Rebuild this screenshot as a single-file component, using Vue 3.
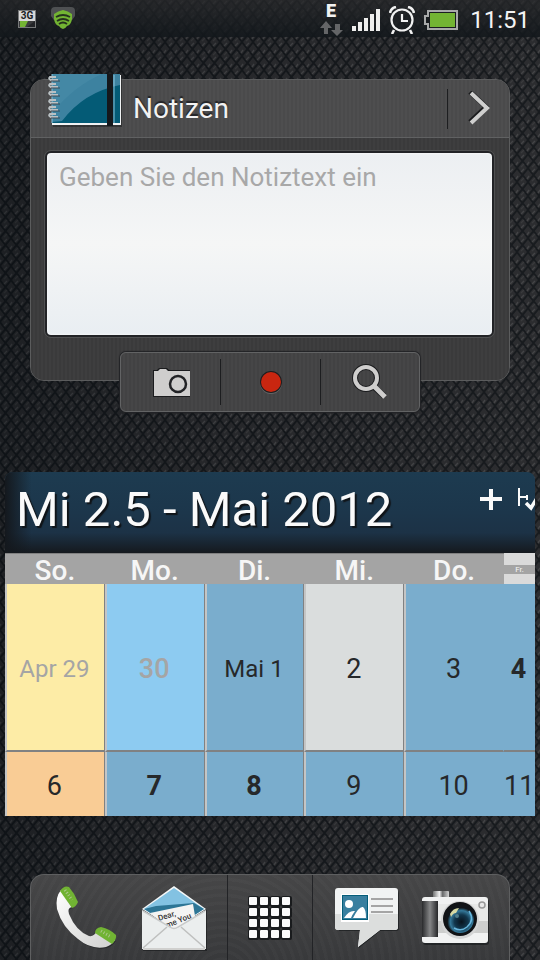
<script setup>
import { ref } from 'vue'

const note = ref('')
const dayNames = ['So.', 'Mo.', 'Di.', 'Mi.', 'Do.']
const weeks = [
  [
    { label: 'Apr 29', tone: 'yellow muted month' },
    { label: '30', tone: 'sky muted semi' },
    { label: 'Mai 1', tone: 'blue month' },
    { label: '2', tone: 'today' },
    { label: '3', tone: 'blue' },
    { label: '4', tone: 'blue bold' },
  ],
  [
    { label: '6', tone: 'orange' },
    { label: '7', tone: 'blue bold' },
    { label: '8', tone: 'blue bold' },
    { label: '9', tone: 'blue' },
    { label: '10', tone: 'blue' },
    { label: '11', tone: 'blue' },
  ],
]
const gridSteps = [0, 11, 22, 33]
const bars = [5, 9, 13, 17, 22]
</script>

<template>
  <div class="screen">
    <svg class="leather" aria-hidden="true">
      <defs>
        <pattern id="weave" width="11" height="14" patternUnits="userSpaceOnUse">
          <rect width="11" height="14" fill="#2a2b2e" />
          <path d="M-1 -1L12 15M12 -1L-1 15" stroke="#0e1216" stroke-width="2" />
          <path d="M4 4L7 1M10 11L12 8M-1 11L1 8" stroke="#4b4c4e" stroke-width="1.4" />
          <path d="M4 13L7 10" stroke="#3d3e40" stroke-width="1.2" />
        </pattern>
        <linearGradient id="shade" x1="0" x2="1" y1="0" y2="0">
          <stop offset="0" stop-color="#101418" stop-opacity=".5" />
          <stop offset=".5" stop-color="#222326" stop-opacity=".3" />
          <stop offset="1" stop-color="#303133" stop-opacity=".3" />
        </linearGradient>
      </defs>
      <rect width="100%" height="100%" fill="url(#weave)" />
      <rect width="100%" height="100%" fill="url(#shade)" />
    </svg>

    <header class="status">
      <div class="status-group">
        <svg class="net" viewBox="0 0 18 18" width="18" height="18" aria-hidden="true">
          <rect width="18" height="18" fill="#77797a" />
          <rect x="1" y="1" width="16" height="10" fill="#d8d8d8" />
          <text x="9" y="9" text-anchor="middle" font-size="10" font-weight="700" fill="#1b1d1f">3G</text>
          <rect x="1" y="11" width="16" height="6" fill="#3a3b3d" />
          <path d="M2 11h8l-3 6H2z" fill="#73b433" />
          <path d="M17 11v6H9z" fill="#222427" />
        </svg>
        <svg viewBox="0 0 26 24" width="26" height="24" aria-hidden="true">
          <path d="M1 4q0-4 4-4h16q4 0 4 4v5q-2 4-6 6H7q-4-2-6-6z" fill="#4e5052" />
          <path d="M4 7q4-3 9-4 5 1 9 4v5q-1 6-5 7-2 3-4 3t-4-3q-4-1-5-7z" fill="#73b433" />
          <path d="M6 10q7-4 14 0M7 14q6-4 12 0M9 17q4-3 8 0" fill="none" stroke="#25321d" stroke-width="1.8" />
        </svg>
      </div>
      <div class="status-group right">
        <svg viewBox="0 0 24 33" width="24" height="33" aria-hidden="true">
          <text x="12" y="14" text-anchor="middle" font-size="18" font-weight="900" fill="#f2f2f2">E</text>
          <path d="M7 18l6 7H9v6H5v-6H1zM18 33l-6-6h4v-6h5v6h3z" fill="#646567" />
        </svg>
        <svg viewBox="0 0 28 22" width="28" height="22" aria-hidden="true">
          <rect v-for="(h, i) in bars" :key="h" :x="i * 6" :y="22 - h" width="4" :height="h" fill="#eeeeed" />
        </svg>
        <svg viewBox="0 0 26 28" width="26" height="28" fill="none" stroke="#f2f2f2" aria-hidden="true">
          <circle cx="13" cy="14" r="10.5" stroke-width="2.2" />
          <path d="M13 8v7h6" stroke-width="2.2" />
          <path d="M1 7q1-5 6-6M19 1q5 1 6 6M5 24l-2 4M21 24l2 4" stroke-width="2.6" />
        </svg>
        <svg viewBox="0 0 34 20" width="34" height="20" aria-hidden="true">
          <path d="M3 0h31v20H3v-5H0V5h3z" fill="#a9aaaa" />
          <path d="M5 2h27v16H5v-5H2V7h3z" fill="#1a1d20" />
          <rect x="6" y="3" width="25" height="14" fill="#73b433" />
        </svg>
        <time class="clock">11:51</time>
      </div>
    </header>

    <main>
      <section class="notes" aria-label="Notizen">
        <div class="note-card">
          <div class="note-head">
            <svg class="book" viewBox="0 0 76 56" width="76" height="56" aria-hidden="true">
              <path d="M5 2h69v51H5z" fill="#17191c" opacity=".5" />
              <path d="M4 1h69v50H4z" fill="#f0f2f3" />
              <path d="M4 0h68v49H4z" fill="#045b76" />
              <path d="M4 0h68v11Q36 18 14 47L4 48z" fill="#3d82a0" />
              <path d="M4 0h50Q26 12 5 38z" fill="#5797b3" opacity=".3" />
              <path d="M59 0h6v52h-6z" fill="#15181c" />
              <path d="M4 0v49M66 1v48" stroke="#8ac3dc" stroke-width="1" />
              <path v-for="y in [6, 13, 21, 29, 36, 43]" :key="y" :d="`M10 ${y}H3q-3-1-1-3h6`" fill="none" stroke="#b9c0c3" stroke-width="2" />
              <path v-for="y in [7, 14, 22, 30, 37, 44]" :key="y" :d="`M3 ${y}h9`" stroke="#3a4b54" stroke-width="1" />
            </svg>
            <h2>Notizen</h2>
            <a class="open" href="#" aria-label="Notizen öffnen">
              <svg viewBox="0 0 22 36" width="22" height="36" fill="none" aria-hidden="true">
                <path d="M2 1l16 15L2 31" stroke="#1b1c1e" stroke-width="5" />
                <path d="M3 2l16 15L3 32" stroke="#cfcfce" stroke-width="4" />
              </svg>
            </a>
          </div>
          <div class="note-body">
            <textarea v-model="note" aria-label="Notiztext" placeholder="Geben Sie den Notiztext ein"></textarea>
          </div>
        </div>
        <div class="tools">
          <button type="button" aria-label="Foto">
            <svg viewBox="0 0 40 32" width="40" height="32" aria-hidden="true">
              <path d="M2 4h4l2-2h8l2 2h21v27H2z" fill="#1b1c1e" />
              <path d="M3 5h4l2-2h6l2 2h22v25H3z" fill="#cfcecd" />
              <circle cx="27" cy="18" r="8" fill="#cfcecd" stroke="#222326" stroke-width="2.5" />
            </svg>
          </button>
          <button type="button" aria-label="Aufnehmen">
            <svg viewBox="0 0 24 24" width="24" height="24" aria-hidden="true">
              <circle cx="13" cy="13" r="11" fill="#656667" />
              <circle cx="13" cy="12" r="11" fill="#1c1d1f" />
              <circle cx="13" cy="12" r="10" fill="#c92610" />
            </svg>
          </button>
          <button type="button" aria-label="Suchen">
            <svg viewBox="0 0 36 36" width="36" height="36" fill="none" aria-hidden="true">
              <path d="M21 22l11 10" stroke="#1b1c1e" stroke-width="6" />
              <circle cx="14" cy="14" r="11" stroke="#1b1c1e" stroke-width="6" />
              <circle cx="14" cy="14" r="11" stroke="#cfcecd" stroke-width="4" />
              <path d="M22 22l11 11" stroke="#cfcecd" stroke-width="5" />
            </svg>
          </button>
        </div>
      </section>

      <section class="calendar" aria-label="Kalender">
        <div class="cal-head">
          <h1>Mi 2.5 - Mai 2012</h1>
          <button type="button" aria-label="Termin hinzufügen">
            <svg viewBox="0 0 22 22" width="22" height="22" aria-hidden="true">
              <path d="M11 0v21M0 10h22" stroke="#fafafa" stroke-width="4" />
            </svg>
          </button>
          <button type="button" aria-label="Aufgaben">
            <svg viewBox="0 0 18 24" width="18" height="24" fill="none" aria-hidden="true">
              <path d="M2 0v18M3 9h8M10 7v5" stroke="#fafafa" stroke-width="2" />
              <path d="M9 15l5 5 6-10" stroke="#fafafa" stroke-width="3.5" />
            </svg>
          </button>
        </div>
        <table>
          <colgroup>
            <col v-for="name in dayNames" :key="name" />
            <col class="narrow" />
          </colgroup>
          <thead>
            <tr>
              <th v-for="name in dayNames" :key="name" scope="col">{{ name }}</th>
              <th scope="col" class="small-day"><span>Fr.</span></th>
            </tr>
          </thead>
          <tbody>
            <tr v-for="(week, w) in weeks" :key="w">
              <td v-for="day in week" :key="day.label" :class="day.tone">{{ day.label }}</td>
            </tr>
          </tbody>
        </table>
      </section>
    </main>

    <nav class="dock" aria-label="Favoriten">
      <div class="dock-side">
        <a href="#" aria-label="Telefon">
          <svg viewBox="0 0 64 66" width="64" height="66" aria-hidden="true">
            <defs>
              <linearGradient id="handset" x1="0" y1="0" x2="1" y2="1">
                <stop offset="0" stop-color="#ffffff" />
                <stop offset="1" stop-color="#cfcfce" />
              </linearGradient>
            </defs>
            <path d="M7 6Q1 13 3 25 8 43 24 55 37 66 52 63 58 61 61 56L43 47Q40 53 35 52 22 47 14 30 12 24 18 23z" fill="#16181a" opacity=".5" />
            <path d="M6 5Q0 12 2 24 7 42 23 54 36 65 51 62 57 60 60 55L42 46Q39 52 34 51 21 46 14 29 12 23 17 22z" fill="url(#handset)" />
            <path d="M5 6Q9 0 14 2 20 9 23 17 21 22 17 23z" fill="#71b333" />
            <path d="M40 48Q40 43 46 42 55 44 61 50 62 54 57 59z" fill="#71b333" />
            <path d="M10 5l7 10M46 46l10 6" stroke="#abc68b" stroke-width="3" stroke-dasharray="1 2" />
          </svg>
        </a>
        <a href="#" aria-label="Mail">
          <svg viewBox="0 0 66 66" width="66" height="66" aria-hidden="true">
            <path d="M2 25h64v41H2z" fill="#151719" opacity=".6" />
            <path d="M1 24L33 1l32 23-32 20z" fill="#f6f8f8" />
            <path d="M3 24L33 3l30 21-30 19z" fill="#83c2e2" />
            <path d="M3 24l12-3 38-3 10 6-30 19z" fill="#2d7595" />
            <path d="M9 28l43-9 3 18-21 11z" fill="#f4f4f3" />
            <g fill="#333" font-size="8" font-weight="500">
              <text x="18" y="36" transform="rotate(-17 18 36)">Dear,</text>
              <text x="26" y="43" transform="rotate(-22 26 43)">me You</text>
            </g>
            <path d="M1 25l32 19 32-19v39H1z" fill="#ebeeee" />
            <path d="M2 63l24-21M64 63L40 42" stroke="#bfc0bf" stroke-width="1.5" />
            <path d="M2 26l27 16q4 3 8 0l27-16" fill="none" stroke="#c8caca" stroke-width="1.5" />
            <path d="M2 64h62" stroke="#d0d0ce" stroke-width="2" />
          </svg>
        </a>
      </div>
      <a class="apps" href="#" aria-label="Alle Apps">
        <svg viewBox="0 0 44 44" width="44" height="44" aria-hidden="true">
          <template v-for="y in gridSteps" :key="y">
            <g v-for="x in gridSteps" :key="x">
              <rect :x="x" :y="y" width="11" height="11" rx="2" fill="#191b1d" />
              <rect :x="x + 1" :y="y + 1" width="8" height="8" rx="1" fill="#fafafa" />
            </g>
          </template>
        </svg>
      </a>
      <div class="dock-side">
        <a href="#" aria-label="Nachrichten">
          <svg viewBox="0 0 64 60" width="64" height="60" aria-hidden="true">
            <path d="M4 2h58q2 1 2 4v34q0 3-3 3H45L24 60l1-17H4z" fill="#131517" opacity=".6" />
            <path d="M3 0h57q3 0 3 3v36q0 3-3 3H45L23 59l2-17H3q-3 0-3-3V3q0-3 3-3z" fill="#f1f3f3" />
            <path d="M0 26h63v13q0 3-3 3H45L23 59l2-17H3q-3 0-3-3z" fill="#dcdedd" />
            <path d="M6 6h28v28H6z" fill="#fff" />
            <path d="M7 7h26v25H7z" fill="#045d79" />
            <path d="M8 8h24v23H8z" fill="#397f9f" />
            <circle cx="14" cy="16" r="4" fill="#fff" />
            <path d="M9 30q5-8 11-7-3 4-4 7zM18 30q6-12 10-11 3 2 3 11z" fill="#fff" />
            <path d="M36 11h22M36 18h22M36 24h22" stroke="#a5a5a5" stroke-width="2" />
          </svg>
        </a>
        <a href="#" aria-label="Kamera">
          <svg viewBox="0 0 68 54" width="68" height="54" aria-hidden="true">
            <defs>
              <linearGradient id="grip" x1="0" x2="1">
                <stop offset="0" stop-color="#292a2c" />
                <stop offset=".5" stop-color="#858687" />
                <stop offset="1" stop-color="#252628" />
              </linearGradient>
              <linearGradient id="chrome" x1="0" x2="1">
                <stop offset="0" stop-color="#737474" />
                <stop offset=".4" stop-color="#f1f1f1" />
                <stop offset=".6" stop-color="#696a6b" />
                <stop offset="1" stop-color="#d3d3d3" />
              </linearGradient>
              <radialGradient id="lens" cx=".55" cy=".6">
                <stop offset="0" stop-color="#08131d" />
                <stop offset=".5" stop-color="#12374d" />
                <stop offset=".8" stop-color="#347899" />
                <stop offset="1" stop-color="#101418" />
              </radialGradient>
            </defs>
            <rect x="2" y="8" width="66" height="46" rx="3" fill="#131517" opacity=".6" />
            <rect x="12" y="0" width="16" height="8" rx="1" fill="url(#chrome)" />
            <rect x="1" y="6" width="66" height="46" rx="3" fill="#f1f2f2" />
            <path d="M17 13h50v29H17z" fill="#cdcecd" />
            <path d="M17 13h50v17H17z" fill="#e8e9e8" />
            <rect x="1" y="10" width="16" height="36" fill="url(#grip)" />
            <circle cx="39" cy="29" r="19" fill="#d5d6d6" />
            <circle cx="39" cy="28" r="17" fill="#101215" />
            <circle cx="39" cy="28" r="14" fill="url(#lens)" />
            <path d="M48 20q6 9-2 16-6 5-13 1" fill="none" stroke="#68b6dc" stroke-width="1.5" />
            <path d="M29 23q3-6 9-6l-3 5q-3 0-5 4z" fill="#d6d9a4" />
            <circle cx="36" cy="25" r="2" fill="#4f7d8b" />
            <circle cx="61" cy="14" r="3" fill="#e8e8e8" stroke="#999" stroke-width="1.5" />
          </svg>
        </a>
      </div>
    </nav>
  </div>
</template>

<style>
body {
  margin: 0;
  background: #1f2023;
}
</style>

<style scoped>
* {
  box-sizing: border-box;
}

.screen {
  position: relative;
  isolation: isolate;
  display: flex;
  flex-direction: column;
  min-height: 100vh;
  overflow: hidden;
  font-family: Roboto, "Liberation Sans", sans-serif;
}

.leather {
  position: absolute;
  inset: 0;
  z-index: -1;
  width: 100%;
  height: 100%;
}

svg {
  display: block;
  flex: none;
}

h1,
h2 {
  margin: 0;
  font-weight: 400;
}

button {
  padding: 0;
  border: 0;
  background: none;
}

.status {
  display: flex;
  justify-content: space-between;
  height: 37px;
  padding: 0 10px 0 18px;
  background: linear-gradient(rgba(40, 41, 43, 0.7), rgba(18, 23, 27, 0.85));
}

.status-group {
  display: flex;
  align-items: center;
  gap: 14px;
}

.status-group.right {
  gap: 9px;
  padding-top: 2px;
}

.clock {
  margin-left: 3px;
  color: #f4f4f4;
  font-size: 24px;
  line-height: 32px;
}

main {
  flex: 1;
}

.notes {
  padding: 42px 30px 60px;
}

.note-card {
  border: 1px solid #5b5c5d;
  border-radius: 14px;
  background: #3c3c3d;
}

.note-head {
  display: flex;
  align-items: center;
  height: 58px;
  padding-left: 17px;
  border-bottom: 1px solid #606162;
  border-radius: 13px 13px 0 0;
  background: repeating-linear-gradient(90deg, #4a4a4b 0 2px, #4e4e4f 2px 4px);
}

.book {
  margin-top: -14px;
}

.note-head h2 {
  flex: 1;
  padding-left: 9px;
  color: #f2f2f2;
  font-size: 28px;
  line-height: 32px;
  text-shadow: 0 -2px 1px #222326;
}

.open {
  display: grid;
  place-items: center;
  width: 62px;
  height: 40px;
  border-left: 1px solid #1d1e20;
}

.note-body {
  padding: 13px 15px 43px 14px;
  background: repeating-linear-gradient(90deg, #3a3a3b 0 2px, #3e3e3f 2px 4px);
  border-radius: 0 0 13px 13px;
}

textarea {
  display: block;
  width: 100%;
  height: 186px;
  padding: 8px 12px;
  border: 2px solid #222326;
  border-radius: 6px;
  outline: 1px solid #505152;
  background: linear-gradient(#eceff2, #f5f6f6 50%, #e9eef2);
  box-shadow: inset 0 0 3px #ffffff;
  color: #333333;
  font: 26px/32px Roboto, "Liberation Sans", sans-serif;
  resize: none;
}

textarea::placeholder {
  color: #a8a8a8;
  opacity: 1;
}

.tools {
  position: relative;
  display: grid;
  grid-template-columns: repeat(3, 1fr);
  width: 300px;
  height: 60px;
  margin: -29px auto 0;
  padding: 6px 0;
  border: 1px solid #626364;
  border-radius: 6px;
  background: repeating-linear-gradient(90deg, #424243 0 2px, #464647 2px 4px);
  box-shadow: 0 0 1px 1px #222326;
}

.tools button {
  display: grid;
  place-items: center;
}

.tools button + button {
  border-left: 1px solid #1c1d1f;
}

.calendar {
  margin: 0 5px;
  overflow: hidden;
  border-radius: 8px 8px 0 0;
}

.cal-head {
  display: flex;
  align-items: center;
  height: 81px;
  padding-left: 11px;
  background:
    linear-gradient(90deg, #14181d, transparent 5%),
    linear-gradient(#1d3b50, #1c364b 50%, #1c3246 75%, #15191e);
}

.cal-head h1 {
  flex: 1;
  color: #fafafa;
  font-size: 49px;
  line-height: 56px;
  padding-bottom: 6px;
  text-shadow: 2px 2px 1px #101418;
  white-space: nowrap;
}

.cal-head button {
  margin-bottom: 26px;
}

.cal-head button + button {
  width: 18px;
  margin-left: 15px;
}

table {
  width: 100%;
  table-layout: fixed;
  border-collapse: separate;
  border-spacing: 0;
  background: #7aadcd;
}

.narrow {
  width: 31px;
}

th {
  height: 31px;
  padding: 3px 0 0;
  border-top: 1px solid #808080;
  background: #a4a4a4;
  color: #f6f6f6;
  font-size: 28px;
  font-weight: 500;
  line-height: 27px;
}

.small-day {
  padding: 0;
  border-top-color: #dadada;
  background: #dadada;
  font-size: 8px;
  font-weight: 400;
}

.small-day span {
  display: block;
  background: #a4a4a4;
  line-height: 9px;
}

td {
  height: 168px;
  padding: 4px 2px 0 0;
  border-left: 2px solid #c4c5c5;
  border-right: 1px solid #808182;
  border-bottom: 2px solid #808182;
  color: #26282a;
  font-size: 27px;
  line-height: 32px;
  text-align: center;
  white-space: nowrap;
}

tr:last-child td {
  height: 64px;
  border-bottom: 0;
}

td:nth-child(5) {
  border-right-color: #7aadcd;
}

td:last-child {
  border-left: 0;
  border-right: 0;
}

.yellow {
  background: #fdeca6;
}

.orange {
  background: #f9cc95;
}

.sky {
  background: #8dcbf1;
}

.blue {
  background: #7aadcd;
}

.today {
  background: #dadddd;
}

td.muted {
  color: #a5a5a5;
}

td.month {
  font-size: 24px;
}

td.semi {
  font-weight: 500;
}

td.bold {
  font-weight: 700;
}

.dock {
  display: grid;
  grid-template-columns: 1fr 86px 1fr;
  height: 86px;
  margin: 0 30px;
  border: 1px solid #5e5f60;
  border-bottom: 0;
  border-radius: 14px 14px 0 0;
  background:
    repeating-radial-gradient(circle at 40% 120%, rgba(255, 255, 255, 0.02) 0 3px, transparent 4px 8px),
    linear-gradient(#464647, #38393b);
}

.dock-side {
  display: flex;
  align-items: center;
  justify-content: space-between;
  padding: 0 20px 0 24px;
}

.dock-side:last-child {
  padding-left: 22px;
}

.apps {
  display: grid;
  place-items: center;
  border: solid #222326;
  border-width: 0 1px;
}
</style>
